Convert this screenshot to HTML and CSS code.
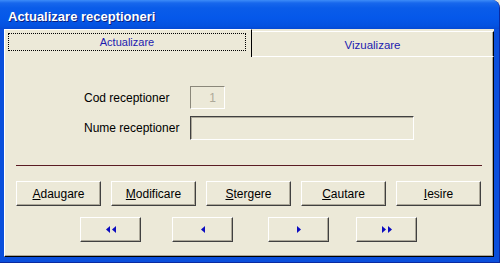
FILE: index.html
```html
<!DOCTYPE html>
<html lang="ro">
<head>
  <meta charset="UTF-8" />
  <title>Actualizare receptioneri</title>
  <link rel="stylesheet" href="styles.css">
</head>
<body>
  <div class="window">
    <div class="titlebar">Actualizare receptioneri</div>
    <div class="client">
      <div class="tabs">
        <div class="tab active"><span class="focus">Actualizare</span></div>
        <div class="tab">Vizualizare</div>
      </div>
      <div class="panel">
        <div class="form">
          <label for="cod">Cod receptioner</label>
          <input id="cod" class="field short" value="1" disabled />
          <label for="nume">Nume receptioner</label>
          <input id="nume" class="field long" value="" />
        </div>
        <div class="separator"></div>
        <div class="actions">
          <button><u>A</u>daugare</button>
          <button><u>M</u>odificare</button>
          <button><u>S</u>tergere</button>
          <button><u>C</u>autare</button>
          <button><u>I</u>esire</button>
        </div>
        <div class="nav">
          <button title="Primul">
            <svg width="10" height="7" viewBox="0 0 10 7"><polygon points="4,0 4,7 0,3.5" /><polygon points="10,0 10,7 6,3.5" /></svg>
          </button>
          <button title="Anterior">
            <svg width="4" height="7" viewBox="0 0 4 7"><polygon points="4,0 4,7 0,3.5" /></svg>
          </button>
          <button title="Urmator">
            <svg width="4" height="7" viewBox="0 0 4 7"><polygon points="0,0 0,7 4,3.5" /></svg>
          </button>
          <button title="Ultimul">
            <svg width="10" height="7" viewBox="0 0 10 7"><polygon points="0,0 0,7 4,3.5" /><polygon points="6,0 6,7 10,3.5" /></svg>
          </button>
        </div>
      </div>
    </div>
  </div>
</body>
</html>
```

FILE: styles.css
```css
body {
  margin: 0;
  padding: 0;
  font-family: "Liberation Sans", Arial, sans-serif;
  font-size: 12px;
  background: #ece9d8;
}
.window {
  width: 500px;
  height: 263px;
  box-sizing: border-box;
  background: #0a4fdc;
  border-radius: 0 8px 0 0;
  border-right: 1px solid #0a2aa0;
  border-bottom: 1px solid #0a2aa0;
  display: flex;
  flex-direction: column;
  overflow: hidden;
}
.titlebar {
  height: 29px;
  box-sizing: border-box;
  padding: 9px 0 0 8px;
  color: white;
  font-weight: bold;
  font-size: 13px;
  text-shadow: 1px 1px #0a1f80;
  background: linear-gradient(#3d8cf8 0, #1767ec 3px, #0a5ce9 8px, #0558ea 18px, #0452e0 26px, #0449d4 29px);
}
.client {
  margin: 0 5px 5px 4px;
  flex: 1;
  background: #ece9d8;
  display: flex;
  flex-direction: column;
}
.tabs {
  display: flex;
  height: 28px;
}
.tab {
  box-sizing: border-box;
  color: #1c1cb0;
  display: flex;
  align-items: center;
  justify-content: center;
}
.tab.active {
  width: 248px;
  height: 28px;
  border-top: 1px solid #fff;
  border-left: 1px solid #fff;
  border-right: 1px solid #000;
  padding: 3px 5px 6px 3px;
  font-size: 11px;
}
.focus {
  flex: 1;
  align-self: stretch;
  border: 1px dotted #000;
  display: flex;
  align-items: center;
  justify-content: center;
  background: #ece9d8;
}
.tab:not(.active) {
  flex: 1;
  margin-top: 2px;
  height: 26px;
  border-top: 1px solid #fff;
  border-right: 1px solid #000;
  border-bottom: 1px solid #fff;
  box-shadow: inset -1px 0 #aca899;
  font-size: 11.5px;
  padding-top: 1px;
}
.panel {
  flex: 1;
  box-sizing: border-box;
  border-left: 1px solid #fff;
  border-right: 1px solid #000;
  border-bottom: 1px solid #000;
  box-shadow: inset -1px -1px #aca899;
}
.form {
  display: grid;
  grid-template-columns: 99px auto;
  grid-template-rows: 23px 24px;
  column-gap: 7px;
  row-gap: 7px;
  padding: 29px 0 0 79px;
}
.form label {
  align-self: center;
}
.field {
  box-sizing: border-box;
  height: 100%;
  margin: 0;
  padding: 0 8px;
  font-family: inherit;
  font-size: 12px;
  background: #ece9d8;
  border: 1px solid;
  border-color: #404040 #fff #fff #404040;
  box-shadow: inset 1px 1px #aca899;
  outline: none;
}
.field.short {
  width: 35px;
  text-align: right;
  color: #aca899;
  border-color: #8a877a #fff #fff #8a877a;
  box-shadow: none;
}
.field.long {
  width: 224px;
}
.separator {
  height: 1px;
  width: 466px;
  margin: 25px 0 0 11px;
  background: #5a1c24;
}
button {
  box-sizing: border-box;
  height: 25px;
  padding: 0;
  font-family: inherit;
  font-size: 12px;
  color: #000;
  background: #ece9d8;
  border: 1px solid;
  border-color: #fff #404040 #404040 #fff;
  box-shadow: inset -1px -1px #aca899;
  display: flex;
  align-items: center;
  justify-content: center;
}
.actions {
  display: flex;
  gap: 10px;
  margin: 15px 0 0 11px;
}
.actions button {
  width: 85px;
}
.nav {
  display: flex;
  margin: 11px 0 0 75px;
}
.nav button {
  width: 61px;
}
.nav button:nth-child(2) { margin-left: 31px; }
.nav button:nth-child(3) { margin-left: 35px; }
.nav button:nth-child(4) { margin-left: 27px; }
.nav svg {
  fill: #0c0cc0;
}
```
